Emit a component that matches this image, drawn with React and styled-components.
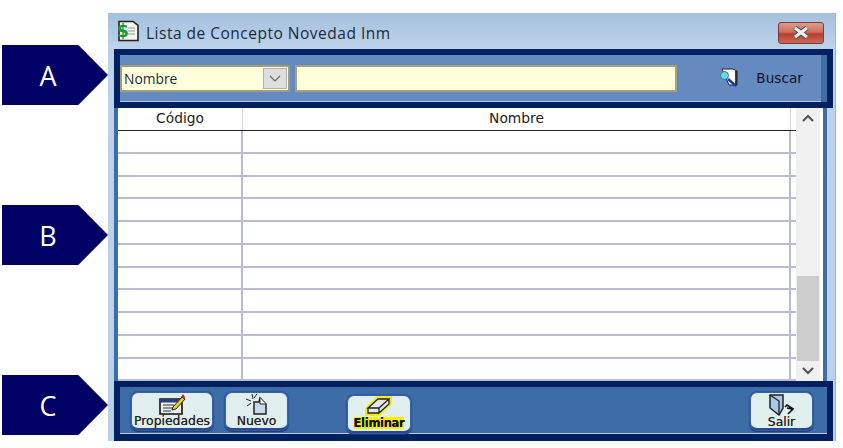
import React from 'react';
import styled, { createGlobalStyle } from 'styled-components';

const Global = createGlobalStyle`
  html, body { margin: 0; padding: 0; background: #fff; }
  body { width: 843px; height: 448px; overflow: hidden; font-family: "DejaVu Sans", sans-serif; }
`;
const Page = styled.div`
  display: flex;
  align-items: flex-start;
  width: 843px;
  height: 448px;
`;
const Callouts = styled.div`
  width: 108px;
  flex: none;
  padding: 45px 0 0 2px;
  box-sizing: border-box;
  display: flex;
  flex-direction: column;
`;
const Callout = styled.div`
  width: 106px;
  height: 60px;
  margin-top: ${p => p.$gap || 0}px;
  background: #000066;
  clip-path: polygon(0 0, 72% 0, 100% 50%, 72% 100%, 0 100%);
  color: #fff;
  font: 27px "Open Sans", sans-serif;
  display: flex;
  align-items: center;
  justify-content: center;
  padding-right: 14px;
  box-sizing: border-box;
`;
const Win = styled.div`
  margin-top: 13px;
  width: 728px;
  height: 428px;
  flex: none;
  background: linear-gradient(#a6c0dd 0, #bcd3ea 36px, #b9d2ea 100%);
  border-right: 1px solid #58d0f0;
  box-sizing: border-box;
  padding: 0 0 0 6px;
  display: flex;
  flex-direction: column;
`;
const TitleBar = styled.div`
  height: 36px;
  display: flex;
  align-items: center;
  padding: 0 11px 0 3px;
  gap: 7px;
  color: #1c2a3c;
  font: 15.5px "Open Sans", sans-serif;
`;
const Title = styled.span`
  flex: 1;
  padding-top: 3px;
  letter-spacing: .5px;
`;
const Close = styled.div`
  width: 46px;
  height: 22px;
  margin-top: 3px;
  border: 1px solid #7d3a3e;
  border-radius: 3px;
  box-sizing: border-box;
  background: linear-gradient(#dd9a8c 0, #cf6f5c 45%, #b73f2c 55%, #c96a58 100%);
  display: flex;
  align-items: center;
  justify-content: center;
`;
const Band = styled.div`
  width: 719px;
  height: ${p => p.$h}px;
  flex: none;
  box-sizing: border-box;
  border: 6px solid #002060;
  background: ${p => p.$bg};
  display: flex;
  align-items: ${p => p.$align || 'center'};
`;
const SearchBand = styled(Band)`
  padding: 0 24px 0 0;
  box-shadow: inset -6px 0 0 #3f6ea6, inset 0 -1px 0 #b7cbe3;
`;
const Combo = styled.div`
  width: 170px;
  height: 27px;
  background: #ffffdc;
  border: 2px solid #a09c7e;
  box-sizing: border-box;
  display: flex;
  align-items: center;
  justify-content: space-between;
  padding: 0 1px 0 2px;
  font: 13.8px "Open Sans", sans-serif;
  color: #1b2b44;
`;
const ComboBtn = styled.div`
  width: 24px;
  height: 21px;
  background: #dedede;
  border: 1px solid #b0b0b0;
  box-sizing: border-box;
  display: flex;
  align-items: center;
  justify-content: center;
`;
const Field = styled.div`
  width: 382px;
  height: 27px;
  margin-left: 5px;
  background: #ffffdc;
  border: 2px solid #a5a184;
  box-sizing: border-box;
`;
const SearchBtn = styled.div`
  flex: 1;
  display: flex;
  justify-content: flex-end;
  align-items: center;
  gap: 17px;
  font: 13.5px "DejaVu Sans", sans-serif;
  letter-spacing: .1px;
  color: #10131c;
  margin-top: -2px;
`;
const GridWrap = styled.div`
  height: 273px;
  flex: none;
  width: 713px;
  border-left: 4px solid #3f6ea6;
  border-right: 4px solid #3f6ea6;
  box-sizing: border-box;
  background: #fff;
  display: flex;
`;
const Table = styled.div`
  width: 678px;
  flex: none;
  display: flex;
  flex-direction: column;
`;
const Head = styled.div`
  height: 23px;
  flex: none;
  display: grid;
  grid-template-columns: 125px 548px 5px;
  border-bottom: 1.5px solid #222;
  box-sizing: border-box;
  font: 13.8px "DejaVu Sans", sans-serif;
  color: #222;
  text-align: center;
  line-height: 21px;
`;
const HeadCell = styled.div`
  border-right: ${p => (p.$last ? 'none' : '1px solid #d8d8e4')};
`;
const Row = styled.div`
  height: 22.75px;
  flex: none;
  display: grid;
  grid-template-columns: 125px 548px 5px;
  border-bottom: 2px solid #b9bcd4;
  box-sizing: border-box;
`;
const Cell = styled.div`
  border-right: ${p => (p.$end ? 'none' : '2px solid #b9bcd4')};
  margin-bottom: -2px;
`;
const Scroll = styled.div`
  width: 24px;
  flex: none;
  background: #f0f0f0;
  display: flex;
  flex-direction: column;
  align-items: center;
  box-sizing: border-box;
`;
const Track = styled.div`
  flex: 1;
  width: 100%;
  display: flex;
  flex-direction: column;
  justify-content: flex-end;
`;
const Thumb = styled.div`
  height: 85px;
  margin: 0 1px;
  background: #cdcdcd;
`;
const ArrowBox = styled.div`
  height: 20px;
  flex: none;
  display: flex;
  align-items: center;
  justify-content: center;
`;
const Toolbar = styled(Band)`
  box-shadow: inset 0 -1px 0 #b7cbe3;
  border-bottom-width: 7px;
  padding: 5px 14px 0 11px;
  gap: 12px;
`;
const Btn = styled.div`
  width: ${p => p.$w}px;
  height: 38px;
  margin-left: ${p => p.$ml || 0}px;
  margin-top: ${p => p.$mt || 0}px;
  background: #e1eeee;
  border: 1px solid #3a62a8;
  border-bottom: 2px solid #2a4a90;
  border-radius: 7px;
  box-shadow: 0 0 0 1px #2f58a6, 0 1px 1px 1px #1e3a78;
  box-sizing: border-box;
  display: flex;
  flex-direction: column;
  align-items: center;
  font: 12.4px "DejaVu Sans", sans-serif;
  text-shadow: 0 0 .3px #555;
  color: #222;
  line-height: 12px;
  white-space: nowrap;
`;
const Hi = styled.span`
  background: #f8f000;
  font-weight: 700;
  font-size: 11.5px;
  letter-spacing: -.3px;
  color: #111;
`;
const Chev = ({ up, thin }) => (
  <svg width="12" height="8" viewBox="0 0 12 8">
    <path d={up ? 'M1 7l5-5 5 5' : 'M1 1l5 5 5-5'} fill="none" stroke={thin ? '#6a6a6a' : '#555'} strokeWidth={thin ? 1.2 : 2.2} />
  </svg>
);
const DocIcon = () => (
  <svg width="22" height="22" viewBox="0 0 22 22">
    <path d="M2 1.5h14l5 4v15H2z" fill="#f4f4f0" stroke="#222" strokeWidth="1.6" />
    <path d="M11 8h7M11 11h7M11 14h7" stroke="#999" />
    <text x="0" y="17" fontFamily="DejaVu Sans" fontWeight="700" fontSize="17" fill="#0b9a3c">$</text>
  </svg>
);
const SearchIcon = () => (
  <svg width="20" height="19" viewBox="0 0 20 19">
    <path d="M3 1h11l4 2v14l-8 0z" fill="#fff" stroke="#223" />
    <path d="M17 3v14" stroke="#111" strokeWidth="1.6" />
    <circle cx="5.5" cy="7.5" r="4" fill="#5fe0e0" stroke="#5a6a90" />
    <path d="M9 11l8 7" stroke="#1238c8" strokeWidth="2.6" />
  </svg>
);
const PropIcon = () => (
  <svg width="28" height="22" viewBox="0 0 28 22">
    <path d="M2 6h22v15H2z" fill="#ecefe8" stroke="#111" strokeWidth="1.6" />
    <path d="M2 6h22v3.5H2z" fill="#2a3f7a" />
    <path d="M5 12h11M5 15h10M5 18h8" stroke="#333" />
    <path d="M15 14l9-10 3 2-9 10-4 1z" fill="#e8d020" stroke="#222" />
    <path d="M23 4l2-3 2 3-1 2z" fill="#d02020" />
  </svg>
);
const NewIcon = () => (
  <svg width="24" height="22" viewBox="0 0 24 22">
    <path d="M9 9h5l1-4 6 6v10H9z" fill="#c8daf0" stroke="#222" strokeWidth="1.5" />
    <path d="M15 5v6h6" fill="#fff" stroke="#222" />
    <path d="M7 1l1 5M1 6l5 2M2 13l4-3M12 1L9 5" stroke="#222" />
  </svg>
);
const EraserIcon = () => (
  <svg width="28" height="21" viewBox="0 0 28 21">
    <path d="M2 13L13 2h12v5L14 18H2z" fill="#fff" stroke="#f6ee00" strokeWidth="4" />
    <path d="M3 12L13 3h11L14 12zM3 12v5h11v-5M14 12v5l10-9V3" fill="#e8e8e8" stroke="#222" strokeWidth="1.3" />
  </svg>
);
const ExitIcon = () => (
  <svg width="26" height="23" viewBox="0 0 26 23">
    <path d="M1 2h13v13l-4 7-9-7z" fill="#a8c8ea" stroke="#222" strokeWidth="1.5" />
    <path d="M10 22V8L1 2" fill="none" stroke="#222" strokeWidth="1.3" />
    <path d="M16 14l2-2 6 4-5 5M23 16l-5-1" fill="none" stroke="#111" strokeWidth="1.7" />
  </svg>
);
const XIcon = () => (
  <svg width="22" height="13" viewBox="0 0 22 13">
    <path d="M5 2l12 9M17 2L5 11" stroke="#4a5058" strokeWidth="5.2" />
    <path d="M5 2l12 9M17 2L5 11" stroke="#f0f0f0" strokeWidth="3.2" />
  </svg>
);

export default function App() {
  const rows = Array.from({ length: 11 });
  return (
    <Page>
      <Global />
      <Callouts>
        <Callout>A</Callout>
        <Callout $gap={100}>B</Callout>
        <Callout $gap={110}>C</Callout>
      </Callouts>
      <Win>
        <TitleBar>
          <DocIcon />
          <Title>Lista de Concepto Novedad Inm</Title>
          <Close><XIcon /></Close>
        </TitleBar>
        <SearchBand $h={59} $bg="#658ac0">
          <Combo>Nombre<ComboBtn><Chev thin /></ComboBtn></Combo>
          <Field />
          <SearchBtn><SearchIcon />Buscar</SearchBtn>
        </SearchBand>
        <GridWrap>
          <Table>
            <Head><HeadCell>Código</HeadCell><HeadCell>Nombre</HeadCell><HeadCell $last /></Head>
            {rows.map((_, i) => (
              <Row key={i}><Cell /><Cell /><Cell $end /></Row>
            ))}
          </Table>
          <Scroll>
            <ArrowBox><Chev up /></ArrowBox>
            <Track><Thumb /></Track>
            <ArrowBox><Chev /></ArrowBox>
          </Scroll>
        </GridWrap>
        <Toolbar $h={60} $bg="#3d6da6" $align="flex-start">
          <Btn $w={82}><PropIcon />Propiedades</Btn>
          <Btn $w={63}><NewIcon />Nuevo</Btn>
          <Btn $w={64} $ml={47} $mt={3}><EraserIcon /><Hi>Eliminar</Hi></Btn>
          <Btn $w={63} $ml={327}><ExitIcon />Salir</Btn>
        </Toolbar>
      </Win>
    </Page>
  );
}
